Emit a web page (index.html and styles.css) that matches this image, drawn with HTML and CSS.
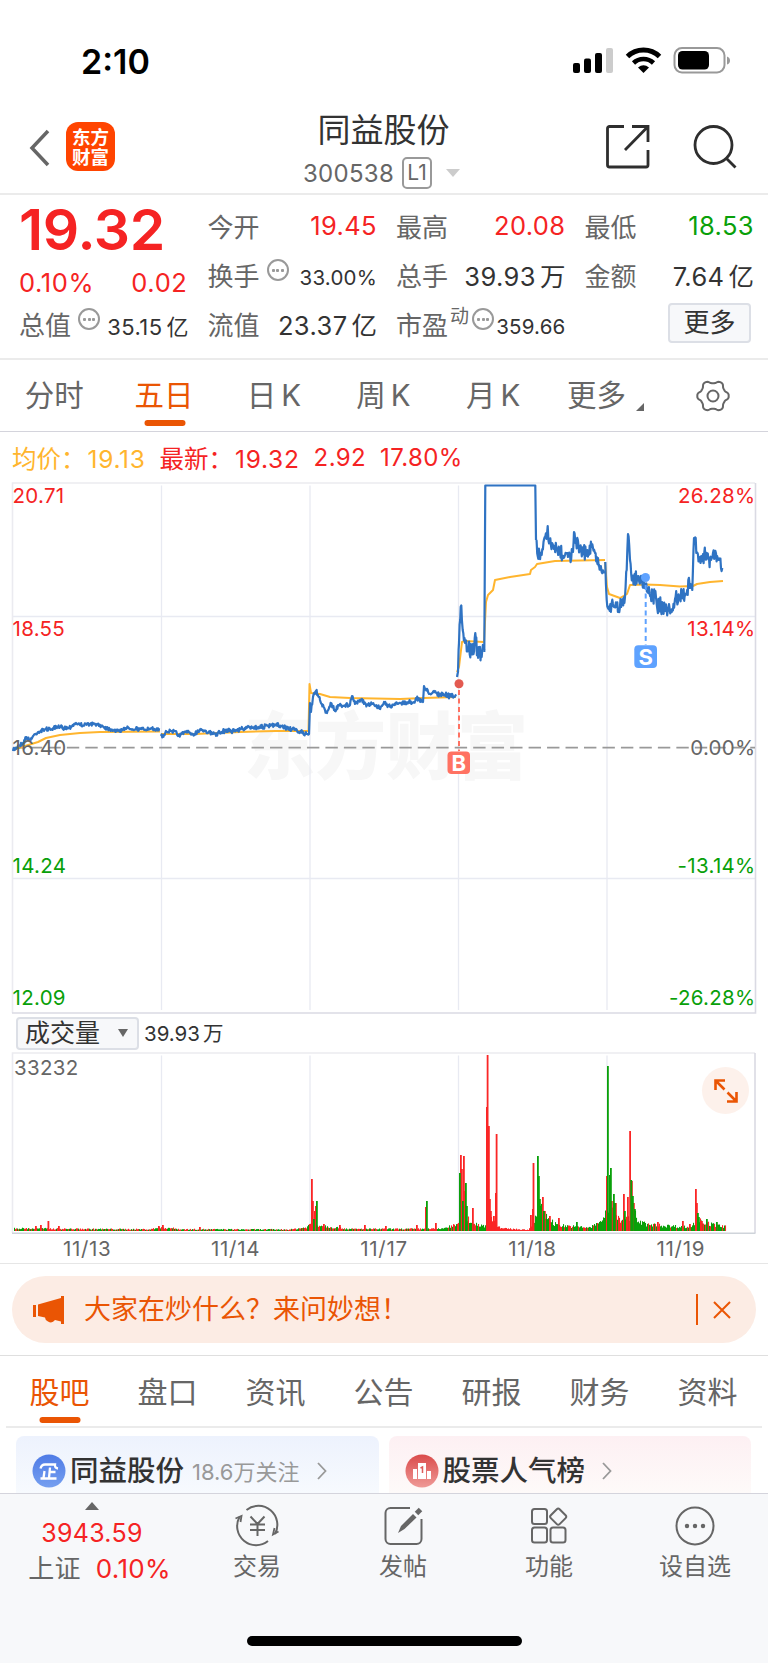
FILE: index.html
```html
<!DOCTYPE html>
<html lang="zh-CN">
<head>
  <meta charset="UTF-8">
  <meta name="viewport" content="width=device-width, initial-scale=1.0">
  <title>同益股份 300538</title>
  <link rel="stylesheet" href="styles.css">
</head>
<body>
  <div class="statusbar">
    <span class="clock">2:10</span>
    <svg class="status-icons" width="160" height="30" viewBox="0 0 160 30">
      <rect x="1" y="16" width="7" height="10" rx="2"/>
      <rect x="12" y="11.500" width="7" height="14.500" rx="2"/>
      <rect x="23" y="6" width="7" height="20" rx="2"/>
      <rect x="34" y="1" width="7" height="25" rx="2" fill="#ccc"/>
      <path d="M55.500 9.500a23 23 0 0 1 32 0" fill="none" stroke="#000" stroke-width="5"/>
      <path d="M61.500 16a14.500 14.500 0 0 1 20 0" fill="none" stroke="#000" stroke-width="4.600"/>
      <path d="M66 20.500q5.500-4.500 11 0l-5.500 5.500z"/>
      <rect x="102.500" y="1" width="50" height="24.500" rx="7.500" fill="none" stroke="#999" stroke-width="2"/>
      <rect x="106" y="4" width="31" height="18.500" rx="4.500"/>
      <path d="M155 9.500q3 1 3 4t-3 4z" fill="#999"/>
    </svg>
  </div>

  <header class="header">
    <div class="header-left">
      <svg width="22" height="38" viewBox="0 0 22 38"><path d="M19 2L3 19l16 17" fill="none" stroke="#666" stroke-width="3.500"/></svg>
      <div class="logo">东方<br>财富</div>
    </div>
    <div class="header-title">
      <h1>同益股份</h1>
      <div class="code"><span>300538</span><span class="level">L1</span><i class="caret"></i></div>
    </div>
    <div class="header-right">
      <svg width="46" height="46" viewBox="0 0 46 46" fill="none" stroke="#2e2e2e" stroke-width="2.800">
        <path d="M19 2.500H4.500a2 2 0 0 0-2 2V41a2 2 0 0 0 2 2H41a2 2 0 0 0 2-2V26"/>
        <path d="M27 2.500h16V18M43 2.500L20 26"/>
      </svg>
      <svg width="46" height="46" viewBox="0 0 46 46" fill="none" stroke="#2e2e2e" stroke-width="2.800">
        <circle cx="21.500" cy="21" r="18.500"/>
        <path d="M34.500 34.500l9 9"/>
      </svg>
    </div>
  </header>

  <section class="quote">
    <div class="quote-col">
      <div class="price red">19.32</div>
      <div class="change red"><span>0.10%</span><span>0.02</span></div>
      <div class="item"><label>总值</label><i class="dots"></i><b class="medium">35.15<em>亿</em></b></div>
    </div>
    <div class="quote-col">
      <div class="item"><label>今开</label><b class="red">19.45</b></div>
      <div class="item"><label>换手</label><i class="dots"></i><b class="small">33.00%</b></div>
      <div class="item"><label>流值</label><b>23.37<em>亿</em></b></div>
    </div>
    <div class="quote-col">
      <div class="item"><label>最高</label><b class="red">20.08</b></div>
      <div class="item"><label>总手</label><b>39.93<em>万</em></b></div>
      <div class="item"><label>市盈<sup>动</sup></label><i class="dots tight"></i><b class="small">359.66</b></div>
    </div>
    <div class="quote-col">
      <div class="item"><label>最低</label><b class="green">18.53</b></div>
      <div class="item"><label>金额</label><b>7.64<em>亿</em></b></div>
      <div class="item"><button class="more">更多</button></div>
    </div>
  </section>

  <nav class="periods">
    <a>分时</a>
    <a class="active">五日</a>
    <a>日<span>K</span></a>
    <a>周<span>K</span></a>
    <a>月<span>K</span></a>
    <a>更多<i class="corner"></i></a>
    <a>
      <svg width="36" height="36" viewBox="-18 -18 36 36" fill="none" stroke="#666" stroke-width="2">
        <path id="gear"/>
        <circle r="5.500"/>
      </svg>
    </a>
  </nav>

  <div class="legend">
    <span class="avg">均价：<b>19.13</b></span>
    <span class="red">最新：<b>19.32</b></span>
    <b class="red">2.92</b>
    <b class="red">17.80%</b>
  </div>

  <svg class="chart" width="768" height="532" viewBox="0 0 768 532">
    <text class="watermark" x="386" y="291" textLength="284" lengthAdjust="spacingAndGlyphs">东方财富</text>
    <path class="grid" d="M161.500 3.500V528M310 3.500V528M458.500 3.500V528M607 3.500V528M13 134.500H755M13 396.500H755"/>
    <path class="frame" d="M12.500 531V1H755"/>
    <path class="frame dark" d="M12 531H755.500V1"/>
    <path class="zero" d="M13 265.700H755"/>
    <g id="average" class="average"></g>
    <g id="price" class="price-line"></g>
    <g class="axis">
      <text class="up" x="12.500" y="21.300">20.71</text>
      <text class="up" x="12.500" y="153.700">18.55</text>
      <text x="12.500" y="272.500">16.40</text>
      <text class="down" x="12.500" y="390.500">14.24</text>
      <text class="down" x="12.500" y="522.800">12.09</text>
    </g>
    <g class="axis end">
      <text class="up" x="755.500" y="21.300">26.28%</text>
      <text class="up" x="755.500" y="153.700">13.14%</text>
      <text x="755.500" y="272.500">0.00%</text>
      <text class="down" x="755.500" y="390.500">-13.14%</text>
      <text class="down" x="755.500" y="522.800">-26.28%</text>
    </g>
    <g class="mark buy">
      <circle cx="459" cy="201.700" r="4.500"/>
      <path d="M459 208V269"/>
      <rect x="447.500" y="269.500" width="22.500" height="22.500" rx="4"/>
      <text x="458.700" y="288.500">B</text>
    </g>
    <g class="mark sell">
      <circle cx="645.500" cy="95.500" r="4.500"/>
      <path d="M645.700 103V163"/>
      <rect x="634.300" y="163.300" width="22.700" height="22.700" rx="4"/>
      <text x="645.700" y="182.500">S</text>
    </g>
  </svg>

  <div class="volume-bar">
    <button class="select">成交量<i></i></button>
    <b>39.93<em>万</em></b>
  </div>

  <div class="volume">
    <svg width="768" height="182" viewBox="0 0 768 182">
      <path class="grid" d="M161.500 3.500V179M310 3.500V179M458.500 3.500V179M607 3.500V179"/>
      <path class="frame" d="M12.500 181V1H755"/>
      <path class="frame dark" d="M755 1V181"/>
      <path class="frame base" d="M12 181.300H755.500"/>
      <g id="bars"></g>
      <text class="max" x="14" y="22.500">33232</text>
    </svg>
    <button class="expand">
      <svg width="24" height="24" viewBox="0 0 24 24" fill="none" stroke="#ea5504" stroke-width="2.600">
        <path d="M11 1.500H1.500V11M1.500 1.500l9 9M22.500 13v9.500H13M22.500 22.500l-9-9"/>
      </svg>
    </button>
  </div>
  <div class="dates">
    <span>11/13</span><span>11/14</span><span>11/17</span><span>11/18</span><span>11/19</span>
  </div>

  <div class="notice-wrap">
    <div class="notice">
      <svg width="34" height="28" viewBox="0 0 34 28" fill="#ea5504">
        <path d="M1 9h3v12H1zM6 8.500L29 2V0h3v28h-3v-2.500l-6-1.500q-3 4-7 1.500-3-1.500-3-4L6 20z"/>
      </svg>
      <span class="notice-text">大家在炒什么？来问妙想！</span>
      <i class="divider"></i>
      <svg width="18" height="18" viewBox="0 0 18 18"><path d="M1 1l16 16M17 1L1 17" stroke="#ea5504" stroke-width="2"/></svg>
    </div>
  </div>

  <nav class="tabs">
    <a class="active">股吧</a>
    <a>盘口</a>
    <a>资讯</a>
    <a>公告</a>
    <a>研报</a>
    <a>财务</a>
    <a>资料</a>
  </nav>

  <div class="cards">
    <div class="card blue">
      <svg width="34" height="34" viewBox="0 0 34 34">
        <defs><linearGradient id="gb" x1="0" y1="0" x2="0" y2="1"><stop offset="0" stop-color="#4f7be6"/><stop offset="1" stop-color="#759ff0"/></linearGradient></defs>
        <circle cx="17" cy="17" r="16.500" fill="url(#gb)"/>
        <path d="M8.500 14.500Q9.500 10.500 13 10.500H23Q22.500 14 26 14.500M18 13.500L17 24M17.500 18h6M12.500 17l-1 7M8.500 24.500h16" fill="none" stroke="#fff" stroke-width="2.300"/>
      </svg>
      <strong>同益股份</strong>
      <span class="follow">18.6万关注</span>
      <svg class="chev" width="10" height="18" viewBox="0 0 10 18"><path d="M1 1l7.500 8L1 17" fill="none" stroke="#999" stroke-width="1.800"/></svg>
    </div>
    <div class="card pink">
      <svg width="34" height="34" viewBox="0 0 34 34">
        <defs><linearGradient id="gr" x1="0" y1="0" x2="0" y2="1"><stop offset="0" stop-color="#da4b4b"/><stop offset="1" stop-color="#ef9a97"/></linearGradient></defs>
        <circle cx="17" cy="17" r="16.500" fill="url(#gr)"/>
        <path d="M8 15h4v10H8zM13 9h8v16h-8zM22 17h4v8h-4z" fill="#fff"/>
        <path d="M15.500 14l2-1v6" fill="none" stroke="#dd5c5a" stroke-width="1.500"/>
      </svg>
      <strong>股票人气榜</strong>
      <svg class="chev" width="10" height="18" viewBox="0 0 10 18"><path d="M1 1l7.500 8L1 17" fill="none" stroke="#999" stroke-width="1.800"/></svg>
    </div>
  </div>

  <footer class="bottom">
    <div class="index">
      <i class="tri"></i>
      <b class="red">3943.59</b>
      <div><span>上证</span><b class="red">0.10%</b></div>
    </div>
    <div class="action">
      <svg width="48" height="44" viewBox="0 0 48 44" fill="none" stroke="#666" stroke-width="2">
        <path d="M13.500 6A19 19 0 0 1 42 30M35 37A19 19 0 0 1 6.500 13"/>
        <path d="M2.500 14.500l6-2.500-1 6M45.500 27.500l-5.500 3 1.500-6.500" stroke-width="1.800"/>
        <path d="M17.500 12.500l7 7.500 7-7.500M24.500 20v12M17 20.500h15M17 26h15"/>
      </svg>
      <span>交易</span>
    </div>
    <div class="action">
      <svg width="48" height="44" viewBox="0 0 48 44" fill="none" stroke="#666" stroke-width="2">
        <path d="M31 4H11.500a5 5 0 0 0-5 5v26a5 5 0 0 0 5 5h26a5 5 0 0 0 5-5V15"/>
        <path d="M19 29l3-7L34 10l3.500 3.500L25.500 25z" fill="#666" stroke="none"/>
        <path d="M37.500 9.500l4-4" stroke-width="5"/>
      </svg>
      <span>发帖</span>
    </div>
    <div class="action">
      <svg width="48" height="44" viewBox="0 0 48 44" fill="none" stroke="#666" stroke-width="2">
        <rect x="7" y="5" width="15" height="15" rx="2.500"/>
        <rect x="7" y="23.500" width="15" height="15" rx="2.500"/>
        <rect x="25.500" y="23.500" width="15" height="15" rx="2.500"/>
        <path d="M31.800 5.300q1.400-1.400 2.800 0l6 6q1.400 1.400 0 2.800l-6 6q-1.400 1.400-2.800 0l-6-6q-1.400-1.400 0-2.800z"/>
      </svg>
      <span>功能</span>
    </div>
    <div class="action">
      <svg width="48" height="44" viewBox="0 0 48 44" fill="none" stroke="#666" stroke-width="2">
        <circle cx="24" cy="22" r="18.500"/>
        <g fill="#666" stroke="none"><circle cx="16" cy="22" r="2.200"/><circle cx="24" cy="22" r="2.200"/><circle cx="32" cy="22" r="2.200"/></g>
      </svg>
      <span>设自选</span>
    </div>
    <div class="home"></div>
  </footer>

  <script src="script.js"></script>
</body>
</html>
```
FILE: styles.css
```css
* {
  box-sizing: border-box;
}

body {
  margin: 0;
  width: 768px;
  height: 1663px;
  overflow: hidden;
  background: #fff;
  color: #333;
  font-family: Inter, "Noto Sans CJK SC", sans-serif;
  font-weight: 400;
  display: flex;
  flex-direction: column;
}

svg {
  display: block;
  flex-shrink: 0;
}

b, em, i, h1, label {
  font-style: normal;
  font-weight: 400;
}

button {
  font-family: inherit;
  padding: 0;
}

.red {
  color: #f52323;
}

.green {
  color: #09a009;
}

/* status bar and header */

.statusbar {
  height: 102px;
  padding: 47px 36px 0 81px;
  display: flex;
  justify-content: space-between;
}

.clock {
  font-size: 34px;
  line-height: 29px;
  font-weight: 600;
  color: #000;
}

.header {
  height: 93px;
  border-bottom: 2px solid #ebebeb;
  padding: 0 30px 0 29px;
  display: grid;
  grid-template-columns: 1fr 240px 1fr;
}

.header-left {
  display: flex;
  gap: 15px;
  padding-top: 20px;
}

.header-left > svg {
  margin-top: 7px;
}

.logo {
  width: 49px;
  height: 49px;
  border-radius: 12px;
  background: #ff4400;
  color: #fff;
  font-size: 18.500px;
  line-height: 20px;
  font-weight: 700;
  text-align: center;
  padding-top: 5px;
}

.header-title {
  text-align: center;
}

.header-title h1 {
  margin: 8px 0 0;
  font-size: 33px;
  line-height: 40px;
}

.code {
  display: flex;
  align-items: center;
  justify-content: center;
  margin-top: 7px;
  color: #666;
  font-size: 24px;
  letter-spacing: 0.300px;
  height: 32px;
  padding-right: 4px;
}

.level {
  width: 30px;
  height: 32px;
  margin: 0 14px 0 8px;
  border: 2px solid #999;
  border-radius: 5px;
  font-size: 21px;
  line-height: 28px;
  letter-spacing: 0;
}

.caret {
  border: 7px solid transparent;
  border-top: 8px solid #ccc;
  border-bottom: 0;
}

.header-right {
  display: flex;
  justify-content: flex-end;
  gap: 41px;
  padding-top: 22px;
}

/* quote */

.quote {
  height: 165px;
  border-bottom: 2px solid #ebebeb;
  padding: 6px 14px 0 19px;
  display: flex;
  gap: 20px;
}

.quote-col {
  width: 168.500px;
}

.price {
  font-size: 57px;
  font-weight: 600;
  line-height: 58px;
  height: 64px;
  letter-spacing: -0.300px;
}

.change {
  display: flex;
  justify-content: space-between;
  height: 34px;
  line-height: 36px;
  font-size: 25.500px;
  letter-spacing: 0.600px;
}

.item {
  height: 49px;
  display: flex;
  align-items: center;
}

.item label {
  font-size: 26px;
  color: #666;
  white-space: nowrap;
}

.item sup {
  font-size: 19px;
  line-height: 1;
  vertical-align: 12px;
  margin-left: 2px;
}

.item b {
  margin-left: auto;
  margin-right: -1px;
  font-size: 25.500px;
  letter-spacing: 0.400px;
  white-space: nowrap;
}

.item b em {
  margin-left: 4px;
  letter-spacing: 0;
}

.item b.small {
  font-size: 20.500px;
  letter-spacing: 0.200px;
  padding-top: 5px;
}

.item b.medium {
  font-size: 22px;
  padding-top: 3px;
}

.dots {
  width: 22px;
  height: 22px;
  margin: -9px 0 0 7px;
  flex-shrink: 0;
  border: 2px solid #999;
  border-radius: 50%;
  background: radial-gradient(circle, #999 1.300px, transparent 1.800px) center / 5px 5px no-repeat,
    radial-gradient(circle, #999 1.300px, transparent 1.800px) 2px center / 5px 5px no-repeat,
    radial-gradient(circle, #999 1.300px, transparent 1.800px) 11px center / 5px 5px no-repeat;
}

.dots.tight {
  margin-left: 3px;
}

.more {
  width: 83px;
  height: 40px;
  margin-left: auto;
  margin-right: 2px;
  margin-bottom: 1px;
  border: 2px solid #dcdfe6;
  border-radius: 4px;
  background: #f7f8fa;
  color: #333;
  font-size: 26px;
  line-height: 34px;
}

/* period tabs */

.periods {
  height: 72px;
  border-bottom: 1px solid #d4d4dc;
  display: flex;
}

.periods a {
  flex: 1;
  display: flex;
  align-items: center;
  justify-content: center;
  font-size: 29.500px;
  line-height: 68px;
  padding: 0 1px 2px 0;
  color: #666;
  position: relative;
}

.periods a span {
  margin-left: 5px;
}

.periods a svg {
  margin-top: 2px;
}

.periods .active,
.tabs .active {
  color: #ea5504;
}

.active::after {
  content: "";
  position: absolute;
  left: 50%;
  bottom: 5px;
  width: 41px;
  height: 6px;
  border-radius: 3px;
  background: #ea5504;
  transform: translateX(-50%);
}

.tabs .active::after {
  bottom: 3px;
}

.corner {
  border-left: 8px solid transparent;
  border-bottom: 8px solid #666;
  margin: 24px -5px 0 10px;
}

/* charts */

.legend {
  height: 50px;
  padding: 0 12px;
  display: flex;
  align-items: center;
  gap: 14px;
  font-size: 24.500px;
}

.legend b {
  letter-spacing: 0.700px;
}

.legend > b {
  font-size: 24px;
  letter-spacing: 0.400px;
}

.avg {
  color: #ffb52e;
}

.avg b,
.avg + span b {
  margin-left: 2px;
}

.grid {
  stroke: #e8eaf2;
  stroke-width: 1.300;
  fill: none;
}

.frame {
  stroke: #ebebf0;
  stroke-width: 1.600;
  fill: none;
}

.frame.dark {
  stroke: #dadae3;
}

.frame.base {
  stroke: #cfd4da;
}

.zero {
  stroke: #999;
  stroke-width: 1.700;
  stroke-dasharray: 12.400 6.070;
  stroke-dashoffset: 1.570;
}

.watermark {
  font-family: "Noto Sans CJK SC", sans-serif;
  font-size: 73px;
  font-weight: 900;
  fill: #f7f7f7;
  text-anchor: middle;
}

.average,
.price-line {
  fill: none;
  stroke: #ffb52e;
  stroke-width: 2;
  stroke-linejoin: round;
}

.price-line {
  stroke: #2f73c3;
  stroke-width: 2.200;
}

.axis,
.max {
  font-size: 20.500px;
  letter-spacing: 0.300px;
  fill: #666;
}

.axis.end {
  text-anchor: end;
}

.axis .up {
  fill: #f52323;
}

.axis .down {
  fill: #09a009;
}

.mark {
  fill: #ff7262;
  stroke-width: 2;
}

.mark path {
  stroke: #ff7262;
  stroke-dasharray: 5 3.500;
}

.buy circle {
  fill: #e35a50;
}

.sell {
  fill: #5ea2ff;
}

.sell path {
  stroke: #5ea2ff;
}

.mark text {
  fill: #fff;
  font-size: 22px;
  font-weight: 700;
  text-anchor: middle;
}

.volume-bar {
  height: 38px;
  padding: 1px 16px 0;
  display: flex;
  align-items: center;
  gap: 5px;
  font-size: 20.500px;
}

.volume-bar b {
  padding-bottom: 3px;
}

.volume-bar em {
  margin-left: 3px;
}

.select {
  width: 123px;
  height: 33px;
  border: 2px solid #dcdfe6;
  border-radius: 4px;
  background: #f7f8fa;
  color: #333;
  font-size: 25px;
  line-height: 27px;
  display: flex;
  align-items: center;
  justify-content: space-between;
  padding: 0 9px 1px 7px;
}

.select i {
  border: 5px solid transparent;
  border-top: 8px solid #666;
  border-bottom: 0;
}

.volume {
  position: relative;
}

.expand {
  position: absolute;
  top: 15px;
  right: 19px;
  width: 47px;
  height: 47px;
  border: 0;
  border-radius: 50%;
  background: #fdf1eb;
  display: flex;
  align-items: center;
  justify-content: center;
}

.dates {
  height: 30px;
  padding: 0 13px;
  border-bottom: 1.500px solid #e6e6e6;
  display: flex;
  font-size: 20.500px;
  letter-spacing: 0.700px;
  line-height: 30px;
  color: #666;
}

.dates span {
  flex: 1;
  text-align: center;
}

/* notice */

.notice-wrap {
  height: 92px;
  border-bottom: 1.500px solid #dfdfdf;
  padding: 12px;
}

.notice {
  height: 67px;
  border-radius: 34px;
  background: #fcece4;
  color: #ea5504;
  display: flex;
  align-items: center;
  padding: 0 25px 0 20px;
}

.notice-text {
  flex: 1;
  margin-left: 18px;
  font-size: 27px;
  line-height: 30px;
}

.divider {
  width: 2px;
  height: 31px;
  background: #ea5504;
  margin-right: 15px;
}

/* content tabs */

.tabs {
  height: 72px;
  margin: 0 6px;
  border-bottom: 2px solid #ebebeb;
  display: flex;
}

.tabs a {
  flex: 1;
  text-align: center;
  font-size: 30px;
  line-height: 72px;
  padding-right: 1px;
  color: #666;
  position: relative;
}

.cards {
  height: 65px;
  padding: 8px 17px 0 16px;
  display: flex;
  gap: 10px;
}

.card {
  flex: 1;
  border-radius: 8px 8px 0 0;
  display: flex;
  align-items: center;
  padding: 12px 0 0 16px;
}

.blue {
  background: linear-gradient(#edf2fd, #f7fafe);
}

.pink {
  background: linear-gradient(#fdf0f3, #fefaf9);
}

.card strong {
  font-size: 28.500px;
  font-weight: 500;
  margin-left: 4px;
  line-height: 34px;
}

.follow {
  font-size: 22px;
  color: #999;
  margin-left: 8px;
  margin-bottom: 2px;
}

.chev {
  margin-left: 17px;
}

/* bottom bar */

.bottom {
  flex: 1;
  border-top: 1.500px solid #d4d4dc;
  background: #f7f8fa;
  display: flex;
  position: relative;
  color: #666;
}

.index {
  width: 184px;
  display: flex;
  flex-direction: column;
  align-items: center;
  font-size: 25px;
  letter-spacing: 0.300px;
  line-height: 36px;
  padding-top: 8px;
}

.index > b {
  margin-top: 5px;
}

.index div {
  display: flex;
  gap: 15px;
  font-size: 26px;
  padding-left: 15px;
}

.index div b {
  font-size: 26px;
}

.tri {
  border: 7px solid transparent;
  border-bottom: 8px solid #666;
  border-top: 0;
}

.action {
  width: 146px;
  display: flex;
  flex-direction: column;
  align-items: center;
  padding-top: 10px;
  font-size: 24px;
  line-height: 36px;
}

.action span {
  margin-top: 1px;
}

.home {
  position: absolute;
  left: 247px;
  bottom: 17px;
  width: 275px;
  height: 10px;
  border-radius: 5px;
  background: #000;
}
```
FILE: script.js
```js
// repeatable pseudo random so the chart is always drawn the same way
let seed = 7
const rand = () => {
  seed = (seed * 16807) % 2147483647
  return seed / 2147483647
}

// [x, y] points, one list per unbroken stretch
const prices = [
  [[13, 269], [18, 264], [23, 261], [26, 255], [30, 258], [35, 252], [38, 250], [46, 247], [52, 247], [60, 245], [68, 246], [76, 241], [80, 243], [90, 242], [100, 243], [110, 247], [119, 249], [125, 246], [140, 247], [160, 247.5]],
  [[161, 254], [164, 253], [166, 249], [171, 249], [176, 249], [178, 254], [184, 250], [194, 252], [201, 247], [206, 249], [213, 252], [221, 251], [226, 248], [234, 249], [245, 246], [260, 245], [276, 243], [283, 245], [295, 248], [307, 252], [309, 252], [310, 221], [311, 230], [313, 215], [316, 209], [320, 218], [325, 228], [327, 231], [331, 221], [335, 229], [339, 223], [350, 223], [352, 214], [355, 222], [362, 217], [364, 222], [372, 222], [379, 226], [384, 220], [390, 224.7], [400, 221], [414, 220], [416, 216], [423, 220], [424, 204], [429, 212], [434, 209], [440, 213], [456, 214]],
  [[457, 195], [458, 190], [459, 161], [460.7, 124.7], [462.7, 148], [465, 161], [468.5, 168], [471.7, 170], [475.7, 155], [477.5, 168], [484.3, 168]],
  [[484.3, 170], [485.3, 3.5], [535.3, 3.5], [536, 58]],
  [[536, 58], [537.7, 74], [541.7, 73], [543.5, 60], [546.5, 57], [547.7, 44], [548.5, 59], [554, 67], [560, 69], [565, 73], [570, 73], [573, 70], [574, 50], [575.5, 61], [580, 67], [586.7, 71], [591.7, 65], [595, 71], [599, 83], [601.7, 90], [605, 90.5]],
  [[605.3, 80], [606.7, 118], [608.5, 127], [611.7, 121], [616.7, 125], [618.7, 129], [622, 118], [625, 115], [626.7, 88], [628, 52], [630, 78], [632.3, 96], [638, 94], [641.7, 98], [645.7, 103], [648.3, 111], [653, 111], [656.7, 122], [663, 125], [671.7, 130], [675, 117], [680, 117], [683, 111], [687.7, 113], [688.3, 98], [690, 106], [692.3, 108], [694, 56], [695.7, 56], [696.7, 71], [700, 76], [703, 72], [710, 76], [713, 71], [718, 78], [722.3, 86]]
]
const noise = [2.4, 2.8, 11, 0, 9, 10]

const averages = [
  [[13, 268], [25, 264], [38, 260], [46, 256], [60, 253], [80, 251], [100, 250], [160, 249.5]],
  [[161, 252], [195, 252], [240, 250], [276, 249], [308.5, 249], [309.5, 202], [311, 211], [320, 212], [330, 215], [350, 216], [400, 217], [424, 216], [456, 215]],
  [[457, 190], [459, 185], [462, 160], [465, 159], [484, 160], [486, 120], [488, 113], [493, 108], [495, 98], [510, 95], [530, 92], [531, 88], [535, 85], [537, 82], [555, 79], [605, 78]],
  [[605, 80], [607, 105], [609, 112], [620, 116], [627, 112], [630, 103], [645, 102.5], [660, 103], [680, 104.5], [693, 104], [697, 102], [710, 100], [723, 99]]
]

const valueAt = (points, x) => {
  for (let i = 1; i < points.length; i++) {
    const [x0, y0] = points[i - 1]
    const [x1, y1] = points[i]
    if (x <= x1) return y0 + (y1 - y0) * (x - x0) / (x1 - x0)
  }
  return points[points.length - 1][1]
}

const line = (points) => `<polyline points="${points.map(p => p.join(',')).join(' ')}"/>`

// add minute-level jitter between the points
const jitter = (points, amount) => {
  if (!amount) return points
  const result = [points[0]]
  for (let i = 1; i < points.length; i++) {
    const x0 = points[i - 1][0]
    for (let x = x0 + 0.6; x < points[i][0] - 0.3; x += 0.6) {
      result.push([x.toFixed(1), (valueAt(points, x) + (rand() - 0.5) * 2 * amount * (0.4 + rand() * 0.6)).toFixed(1)])
    }
    result.push(points[i])
  }
  return result
}

document.getElementById('average').innerHTML = averages.map(line).join('')
document.getElementById('price').innerHTML = prices.map((p, i) => line(jitter(p, noise[i]))).join('')

// volume
const red = '#fa2626'
const green = '#09a009'
const base = [[13, 3], [20, 3], [60, 2.5], [150, 2], [160, 4], [170, 3.5], [180, 2], [290, 1.8], [305, 4], [312, 9], [318, 7], [335, 4], [350, 2.3], [440, 2.5], [456, 7], [467, 15], [472, 9], [484, 6], [490, 17], [500, 3], [528, 1.5], [533, 12], [541, 24], [547, 16], [556, 7], [575, 5], [590, 4], [600, 11], [606, 22], [612, 28], [618, 14], [626, 14], [634, 22], [638, 10], [650, 7], [690, 4.5], [699, 15], [704, 9], [724, 5]]
const redSpikes = [[35, 5], [40, 6], [47.5, 10], [58, 5], [158, 5], [162, 6], [199, 4], [311, 52], [312, 30], [314, 20], [315, 25], [323, 7], [339, 6], [364, 6], [385, 5], [416, 6], [425, 24], [435, 8], [460, 76], [461, 62], [463, 75], [464, 40], [472, 23], [486, 124], [486.700, 176], [488, 105], [489, 32], [490, 20], [493, 15], [495, 38], [495.700, 97], [530, 16], [532, 22], [532.600, 68], [542, 34], [544, 20], [549, 15], [558, 13], [606, 55], [609, 45], [611, 30], [615, 28], [623, 37], [627, 34], [629.2, 100], [631, 50], [633, 28], [657, 9], [682, 10], [689, 7], [695, 42], [696, 28], [701, 10]]
const greenSpikes = [[313, 12], [316, 30], [426, 30], [459, 58], [462, 30], [465, 48], [466, 25], [537, 75], [538, 55], [539, 32], [543, 20], [576, 9], [607, 165], [609, 56], [610, 63], [613, 37], [614, 28], [624, 20], [630.3, 51], [632, 35], [634, 22], [697, 18], [698, 14], [706, 12], [716, 9]]

const bar = (x, h, color, width = 1.05) => `<rect x="${x}" y="${(179 - h).toFixed(1)}" width="${width}" height="${h.toFixed(1)}" fill="${color}"/>`
let bars = ''
for (let x = 14; x < 726; x++) {
  const h = Math.max(1, valueAt(base, x) * (0.55 + rand() * 0.6))
  const onlyRed = x > 485 && x < 534
  const calm = x < 440 ? 0.5 : 0.25
  bars += bar(x, h, onlyRed || rand() < calm ? red : green)
}
redSpikes.forEach(([x, h]) => { bars += bar(x, h, red, 1.8) })
greenSpikes.forEach(([x, h]) => { bars += bar(x, h, green, 1.8) })
document.getElementById('bars').innerHTML = bars

// settings icon outline, six soft teeth
let gear = ''
for (let a = 0; a < 360; a += 5) {
  const t = a * Math.PI / 180
  const r = 14.2 + 1.6 * Math.tanh(1.6 * Math.cos(t * 6))
  gear += `${a ? 'L' : 'M'}${(r * Math.cos(t)).toFixed(1)} ${(r * Math.sin(t)).toFixed(1)}`
}
document.getElementById('gear').setAttribute('d', gear + 'z')
```
